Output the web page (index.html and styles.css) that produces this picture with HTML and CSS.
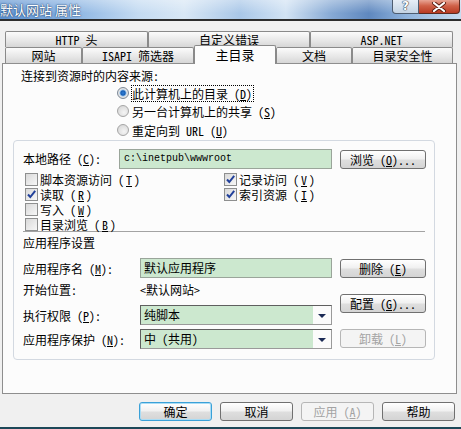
FILE: index.html
```html
<!DOCTYPE html>
<html>
<head>
<meta charset="utf-8">
<link rel="stylesheet" href="styles.css">
</head>
<body>
<div class="window">
  <div class="titlebar">
    <span class="title">默认网站 属性</span>
    <div class="caps">
      <span class="cap cap-help">?</span>
      <span class="cap cap-close"><svg width="16" height="10" viewBox="0 0 16 10"><path d="M3 1 L13 9 M13 1 L3 9" stroke="#5a1e12" stroke-width="4" stroke-linecap="round"/><path d="M3 1 L13 9 M13 1 L3 9" stroke="#fff" stroke-width="2.2" stroke-linecap="round"/></svg></span>
    </div>
  </div>
  <div class="client">
    <div class="tabs">
      <div class="tabrow back">
        <div class="tab w143">HTTP 头</div>
        <div class="tab w162">自定义错误</div>
        <div class="tab w143">ASP.NET</div>
      </div>
      <div class="tabrow front">
        <div class="tab w77">网站</div>
        <div class="tab w112">ISAPI 筛选器</div>
        <div class="tab w82 sel">主目录</div>
        <div class="tab w76">文档</div>
        <div class="tab w101">目录安全性</div>
      </div>
    </div>
    <div class="panel">
      <div class="heading">连接到资源时的内容来源:</div>
      <div class="radios">
        <div class="radio-row"><span class="radio on"></span><span class="focus">此计算机上的目录 (<u>D</u>)</span></div>
        <div class="radio-row"><span class="radio"></span><span>另一台计算机上的共享 (<u>S</u>)</span></div>
        <div class="radio-row r3"><span class="radio"></span><span>重定向到 URL (<u>U</u>)</span></div>
      </div>
      <div class="group">
        <div class="path-row">
          <span class="lbl-path">本地路径 (<u>C</u>):</span>
          <span class="textbox path">c:\inetpub\wwwroot</span>
          <span class="btn b86 mt1">浏览 (<u>O</u>)...</span>
        </div>
        <div class="checks">
          <div class="chk-item"><span class="chk"></span>脚本资源访问 (<u>T</u>)</div>
          <div class="chk-item"><span class="chk on"><svg width="11" height="11" viewBox="0 0 11 11"><path d="M2 5.5 L4.3 8 L9.2 1.8" fill="none" stroke="#21409a" stroke-width="2"/></svg></span>记录访问 (<u>V</u>)</div>
          <div class="chk-item"><span class="chk on"><svg width="11" height="11" viewBox="0 0 11 11"><path d="M2 5.5 L4.3 8 L9.2 1.8" fill="none" stroke="#21409a" stroke-width="2"/></svg></span>读取 (<u>R</u>)</div>
          <div class="chk-item"><span class="chk on"><svg width="11" height="11" viewBox="0 0 11 11"><path d="M2 5.5 L4.3 8 L9.2 1.8" fill="none" stroke="#21409a" stroke-width="2"/></svg></span>索引资源 (<u>I</u>)</div>
          <div class="chk-item"><span class="chk"></span>写入 (<u>W</u>)</div>
          <div></div>
          <div class="chk-item"><span class="chk"></span>目录浏览 (<u>B</u>)</div>
        </div>
        <div class="sep"></div>
        <div class="sub">应用程序设置</div>
        <div class="app">
          <div class="app-left">
            <div class="app-row r-name"><span class="lbl">应用程序名 (<u>M</u>):</span><span class="textbox ctl">默认应用程序</span></div>
            <div class="app-row r-start"><span class="lbl">开始位置:</span><span class="ctl-text">&lt;默认网站&gt;</span></div>
            <div class="app-row r-exec"><span class="lbl">执行权限 (<u>P</u>):</span><span class="select"><span class="sel-text">纯脚本</span><span class="arrow"></span></span></div>
            <div class="app-row r-prot"><span class="lbl">应用程序保护 (<u>N</u>):</span><span class="select"><span class="sel-text">中 (共用)</span><span class="arrow"></span></span></div>
          </div>
          <div class="app-right">
            <span class="btn b86 ab1">删除 (<u>E</u>)</span>
            <span class="btn b86 ab2">配置 (<u>G</u>)...</span>
            <span class="btn b86 ab3 disabled">卸载 (<u>L</u>)</span>
          </div>
        </div>
      </div>
    </div>
    <div class="footer">
      <span class="btn fb default">确定</span>
      <span class="btn fb">取消</span>
      <span class="btn fb disabled">应用 (<u>A</u>)</span>
      <span class="btn fb">帮助</span>
    </div>
  </div>
</div>
</body>
</html>
```
FILE: styles.css
```css
* { box-sizing: border-box; }
html, body { margin: 0; padding: 0; }
body {
  width: 461px;
  height: 429px;
  overflow: hidden;
  background: #f0f0f0;
  font-family: "Noto Sans Mono CJK SC", "Noto Sans CJK SC", sans-serif;
  font-size: 12px;
  line-height: 15px;
  color: #000;
}
u { text-decoration: underline; text-underline-offset: 1px; }

.window {
  height: 429px;
  display: flex;
  flex-direction: column;
  border-bottom: 2px solid #1d4858;
}

.titlebar {
  height: 21px;
  flex: none;
  display: flex;
  justify-content: space-between;
  border-bottom: 2px solid #2c2c2c;
  background:
    linear-gradient(180deg, rgba(255,255,255,0.35), rgba(255,255,255,0) 70%),
    linear-gradient(90deg, #5e92d0 0%, #84afe0 14%, #c4dbf2 30%, #d8e7f5 40%, #a9c7e8 52%, #d2e3f4 62%, #86a9d4 72%, #5f88bf 80%, #8fb3dc 88%, #c8dcf0 100%);
}
.title {
  font-family: "Noto Sans CJK SC", sans-serif;
  font-size: 13px;
  line-height: 19px;
  color: #fff;
  text-shadow: 0 0 2px #1c3f6e, 0 0 1px #1c3f6e;
}
.caps { display: flex; align-items: flex-start; margin-right: 1px; }
.cap {
  height: 14px;
  display: flex;
  align-items: center;
  justify-content: center;
  border: 1px solid #4e5d70;
  border-top: none;
}
.cap-help {
  width: 27px;
  border-radius: 0 0 0 4px;
  background: linear-gradient(#e7eef6, #c3d3e3);
  color: #fff;
  font-family: "DejaVu Sans", sans-serif;
  font-weight: bold;
  font-size: 12px;
  text-shadow: 0 0 1px #2a3a4e, 0 0 1px #2a3a4e, 0 0 1px #2a3a4e;
  line-height: 13px;
}
.cap-close {
  width: 41px;
  border-left: none;
  border-color: #5c2a20;
  border-radius: 0 0 4px 0;
  background: linear-gradient(#e8a595, #d06148 45%, #b83a22);
}

.client {
  flex: 1;
  display: flex;
  flex-direction: column;
  padding-top: 10px;
}

.tabs { margin-left: 5px; width: 448px; }
.tabrow { display: flex; height: 16px; }
.tabrow.front { align-items: flex-end; }
.tab {
  height: 16px;
  border: 1px solid #8a8a8a;
  border-bottom: none;
  border-radius: 2px 2px 0 0;
  background: linear-gradient(#fbfbfb, #e6e6e6 60%, #d6d6d6);
  text-align: center;
  line-height: 15px;
  white-space: nowrap;
}
.tab.sel {
  height: 19px;
  margin-bottom: -1px;
  background: #fcfcfc;
  position: relative;
  z-index: 1;
  line-height: 17px;
  font-size: 13px;
}
.w143 { width: 143px; }
.w162 { width: 162px; }
.w77 { width: 77px; }
.w112 { width: 112px; }
.w82 { width: 82px; }
.w76 { width: 76px; }
.w101 { width: 101px; }

.panel {
  margin-left: 2px;
  width: 455px;
  height: 331px;
  flex: none;
  border: 1px solid #8e8e8e;
  background: #fcfcfc;
  padding: 4px 0 0 10px;
}
.heading { margin-left: 8px; height: 16px; }
.radios { margin-left: 104px; }
.radio-row { display: flex; align-items: center; height: 18px; gap: 3px; }
.radio-row.r3 { margin-top: 1px; }
.radio {
  width: 12px;
  height: 12px;
  border-radius: 50%;
  border: 1px solid #a5a5a5;
  background: radial-gradient(circle at 60% 65%, #f4f4f4, #d2d2d2);
  flex: none;
}
.radio.on {
  border-color: #7e8a99;
  background: radial-gradient(circle, #2f7fd8 0, #1a5fb4 2.2px, #9cc6ee 3.2px, #e8e8e8 4px, #d4d4d4 6px);
}
.focus { outline: 1px dotted #000; outline-offset: 0; padding: 0 1px 0 0; }

.group {
  margin-top: 1px;
  width: 422px;
  height: 220px;
  border: 1px solid #d3d9e1;
  border-radius: 4px;
  padding: 8px 0 0 9px;
}
.path-row { display: flex; align-items: flex-start; height: 20px; }
.lbl-path { width: 96px; line-height: 20px; }
.textbox {
  height: 20px;
  border: 1px solid #9aa59a;
  background: #cce8cf;
  line-height: 18px;
  padding-left: 3px;
}
.textbox.path { width: 213px; font-family: "Liberation Mono", monospace; font-size: 10px; padding-left: 4px; }
.btn {
  display: block;
  height: 19px;
  border: 1px solid #707070;
  border-radius: 3px;
  background: linear-gradient(#ffffff, #f1f1f1 45%, #dedede 55%, #d4d4d4);
  text-align: center;
  line-height: 17px;
  white-space: nowrap;
}
.b86 { width: 86px; }
.mt1 { margin: 1px 0 0 8px; }
.btn.disabled {
  border-color: #b6b6b6;
  background: #f4f4f4;
  color: #a3a3a3;
}
.btn.default {
  border-color: #3aa1d8;
  box-shadow: inset 0 0 0 1px #a9dcf5;
}

.checks {
  margin-top: 3px;
  margin-left: 2px;
  display: grid;
  grid-template-columns: 199px 1fr;
  grid-auto-rows: 15px;
  height: 59px;
}
.chk-item { display: flex; align-items: center; gap: 2px; line-height: 13px; }
.chk {
  width: 13px;
  height: 13px;
  border: 1px solid #8e8f8f;
  background: linear-gradient(135deg, #d9d9d9, #f7f7f7);
  display: flex;
  align-items: center;
  justify-content: center;
  flex: none;
}
.sep { width: 402px; border-top: 1px solid #a3a3a3; }
.sub { margin-top: 3px; height: 15px; }

.app { display: flex; margin-top: 8px; }
.app-left { width: 309px; }
.app-row { display: flex; align-items: center; }
.lbl { width: 117px; }
.r-name { height: 20px; }
.r-start { height: 15px; margin-top: 4px; }
.r-exec { height: 20px; margin-top: 8px; }
.r-prot { height: 20px; margin-top: 4px; }
.ctl { width: 192px; }
.ctl-text { width: 192px; }
.select {
  width: 192px;
  height: 20px;
  display: flex;
  border: 1px solid #5f5f5f;
  border-right-color: #9a9a9a;
  border-bottom-color: #9a9a9a;
}
.sel-text {
  flex: 1;
  background: #cce8cf;
  line-height: 18px;
  padding-left: 3px;
}
.arrow {
  width: 18px;
  background: #fbfbfb;
  position: relative;
}
.arrow::after {
  content: "";
  position: absolute;
  left: 5px;
  top: 8px;
  border-left: 4px solid transparent;
  border-right: 4px solid transparent;
  border-top: 4px solid #1b2a55;
}
.app-right { margin-left: 8px; display: flex; flex-direction: column; }
.ab1 { margin-top: 1px; }
.ab2 { margin-top: 16px; }
.ab3 { margin-top: 16px; }

.footer {
  display: flex;
  justify-content: flex-end;
  gap: 8px;
  margin-top: 8px;
  padding-right: 6px;
}
.fb { width: 73px; }
```
